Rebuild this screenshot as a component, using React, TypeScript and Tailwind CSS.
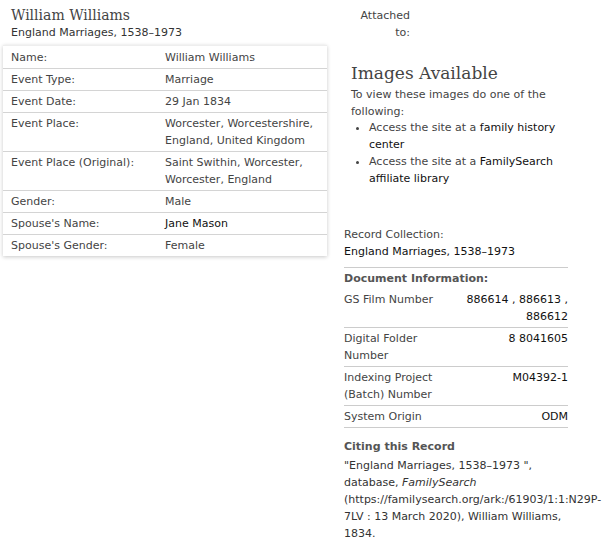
import React from 'react';

const FACTS = [
  { label: 'Name:', value: ['William Williams'] },
  { label: 'Event Type:', value: ['Marriage'] },
  { label: 'Event Date:', value: ['29 Jan 1834'] },
  { label: 'Event Place:', value: ['Worcester, Worcestershire,', 'England, United Kingdom'] },
  { label: 'Event Place (Original):', value: ['Saint Swithin, Worcester,', 'Worcester, England'] },
  { label: 'Gender:', value: ['Male'] },
  { label: "Spouse's Name:", value: ['Jane Mason'], link: true },
  { label: "Spouse's Gender:", value: ['Female'] },
];

const DOCS = [
  { label: ['GS Film Number'], value: ['886614 , 886613 ,', '886612'] },
  { label: ['Digital Folder', 'Number'], value: ['8 8041605'] },
  { label: ['Indexing Project', '(Batch) Number'], value: ['M04392-1'] },
  { label: ['System Origin'], value: ['ODM'] },
];

const sans = "font-['Verdana','DejaVu_Sans',sans-serif]";
const slab = "font-['DejaVu_Serif',serif]";

export default function App() {
  return (
    <div className={`w-[605px] h-[552px] bg-white text-[#444] text-[11px] leading-[17px] ${sans} flex overflow-hidden`}>
      {/* left: record facts */}
      <div className="w-[330px] shrink-0 pt-[6px] pl-[3px]">
        <div className="pl-[8px]">
          <h1 className={`${slab} text-[14px] leading-[18px] text-[#444]`}>William Williams</h1>
          <p className="text-[#333]">England Marriages, 1538–1973</p>
        </div>

        <div className="mt-[4px] w-[324px] bg-white border-t border-[#eee] shadow-[0_1px_4px_rgba(0,0,0,0.22)]">
          {FACTS.map((f, i) => (
            <div
              key={f.label}
              className={`flex px-[8px] py-[2px] ${i === 0 ? 'pt-[3px]' : ''} ${i < FACTS.length - 1 ? 'border-b border-[#d4d4d4]' : ''}`}
            >
              <div className="w-[154px] shrink-0">{f.label}</div>
              <div className={f.link ? 'text-[#111]' : ''}>
                {f.value.map((v) => (
                  <div key={v}>{v}</div>
                ))}
              </div>
            </div>
          ))}
        </div>
      </div>

      {/* right: images + source info */}
      <div className="w-[224px] ml-[14px] shrink-0 pt-[7px]">
        <div className="w-[66px] text-right">
          <div>Attached</div>
          <div>to:</div>
        </div>

        <div className="mt-[19px] pl-[7px]">
          <h2 className={`${slab} text-[17px] leading-[26px] text-[#444]`}>Images Available</h2>
          <p>To view these images do one of the following:</p>
          <ul className="pl-[18px] list-disc mt-[-1px]">
            <li>
              Access the site at a <span className="text-[#111]">family history center</span>
            </li>
            <li>
              Access the site at a <span className="text-[#111]">FamilySearch affiliate library</span>
            </li>
          </ul>
        </div>

        <div className="mt-[39px]">
          <div>Record Collection:</div>
          <div className="text-[#111] pb-[7px] border-b border-[#ccc]">England Marriages, 1538–1973</div>

          <div className="font-bold text-[#555] pt-[2px] pb-[2px]">Document Information:</div>
          {DOCS.map((d) => (
            <div key={d.label[0]} className="flex justify-between border-b border-[#ccc] py-[2px]">
              <div>
                {d.label.map((l) => (
                  <div key={l}>{l}</div>
                ))}
              </div>
              <div className="text-right text-[#111]">
                {d.value.map((v) => (
                  <div key={v}>{v}</div>
                ))}
              </div>
            </div>
          ))}

          <div className="font-bold text-[#555] mt-[10px] pb-[2px]">Citing this Record</div>
          <p className="text-[#333]">
            "England Marriages, 1538–1973 ", database, <i>FamilySearch</i> (https://familysearch.org/ark:/61903/1:1:N29P-7LV : 13 March 2020), William Williams, 1834.
          </p>
        </div>
      </div>
    </div>
  );
}
